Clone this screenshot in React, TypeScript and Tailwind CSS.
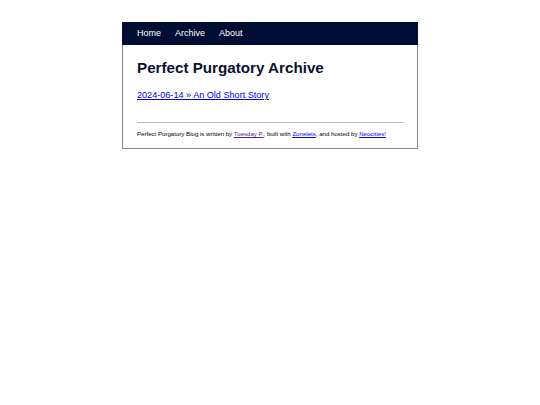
export default function App() {
  return (
    <div className="min-h-[405px] w-[540px] bg-white pt-[22px]" style={{ fontFamily: '"Liberation Sans", Arial, sans-serif' }}>
      <div className="ml-[122px] w-[296px] border border-[#8a8a8a] bg-white">
        <nav className="-mx-px -mt-px flex h-[23px] items-center gap-[14px] bg-[#000d33] pl-[15px] pt-px text-[9px] text-white">
          <span>Home</span>
          <span>Archive</span>
          <span>About</span>
        </nav>
        <div className="px-[14px] pb-[10px]">
          <h1 className="mt-[14px] text-[15.2px] font-bold leading-[18px] text-[#0b1131]">Perfect Purgatory Archive</h1>
          <p className="mt-[13px] text-[9.1px] leading-[11px]">
            <a className="text-[#0000ee] underline">2024-06-14 » An Old Short Story</a>
          </p>
          <hr className="mt-[21px] border-t border-[#bbb]" />
          <p className="mt-[7px] whitespace-nowrap text-[6.1px] leading-[8px] text-black">
            Perfect Purgatory Blog is written by <a className="text-[#551a8b] underline">Tuesday P.</a>, built with{" "}
            <a className="text-[#0000ee] underline">Zonelets</a>, and hosted by <a className="text-[#0000ee] underline">Neocities!</a>
          </p>
        </div>
      </div>
    </div>
  );
}
